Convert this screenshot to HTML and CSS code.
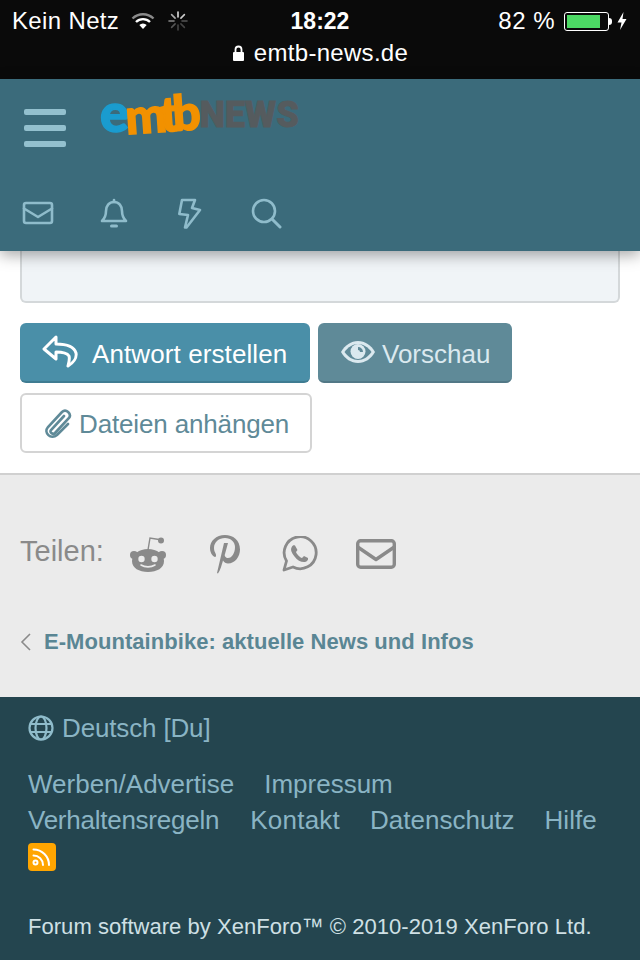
FILE: index.html
```html
<!DOCTYPE html>
<html lang="de">
<head>
<meta charset="utf-8">
<title>emtb-news.de</title>
<link rel="stylesheet" href="styles.css">
</head>
<body>
<div class="status">
  <div class="status-row">
    <div class="status-left">
      <span class="carrier">Kein Netz</span>
      <svg class="wifi" width="24" height="18" viewBox="0 0 24 18"><path d="M1.500 6.500a15 15 0 0 1 21 0" fill="none" stroke="#8a8a8a" stroke-width="2.400"/><path d="M5 10a10 10 0 0 1 14 0" fill="none" stroke="#fff" stroke-width="2.400"/><path d="M8.300 13a5.200 5.200 0 0 1 7.400 0L12 17z" fill="#fff"/></svg>
      <svg class="spin" width="20" height="20" viewBox="0 0 20 20" stroke-width="1.600" stroke-linecap="round"><path d="M10 1v5" stroke="#ddd"/><path d="M16.400 3.600l-3.500 3.500" stroke="#ccc"/><path d="M19 10h-5" stroke="#555"/><path d="M16.400 16.400l-3.500-3.500" stroke="#444"/><path d="M10 19v-5" stroke="#444"/><path d="M3.600 16.400l3.500-3.500" stroke="#555"/><path d="M1 10h5" stroke="#888"/><path d="M3.600 3.600l3.500 3.500" stroke="#aaa"/></svg>
    </div>
    <div class="clock">18:22</div>
    <div class="status-right">
      <span class="percent">82 %</span>
      <span class="battery"><span class="battery-fill"></span></span>
      <span class="battery-tip"></span>
      <svg width="12" height="20" viewBox="0 0 12 20"><path d="M7.500 1L1.500 11.500h4L4 19l6.500-11h-4z" fill="#fff"/></svg>
    </div>
  </div>
  <div class="url">
    <svg width="13" height="17" viewBox="0 0 13 17"><rect x="1" y="7" width="11" height="9" rx="1" fill="#fff"/><path d="M3.500 7V4.500a3 3 0 0 1 6 0V7" fill="none" stroke="#fff" stroke-width="1.800"/></svg>
    <span>emtb-news.de</span>
  </div>
</div>

<header class="header">
  <div class="header-top">
    <div class="burger"><i></i><i></i><i></i></div>
    <div class="logo"><span class="logo-e">e</span><span class="logo-mtb">mtb</span><span class="logo-news">NEWS</span></div>
  </div>
  <nav class="header-icons">
    <svg width="32" height="28" viewBox="0 0 32 28" fill="none" stroke="#8fbccb" stroke-width="2.600" stroke-linejoin="round" stroke-linecap="round"><rect x="2" y="4" width="28" height="20" rx="2"/><path d="M2 9.500l14 8.500 14-8.500"/></svg>
    <svg width="28" height="32" viewBox="0 0 28 32" fill="none" stroke="#8fbccb" stroke-width="2.600" stroke-linejoin="round" stroke-linecap="round"><path d="M14 5c-5 0-8 4-8 9 0 6-2 8-4 10h24c-2-2-4-4-4-10 0-5-3-9-8-9z"/><path d="M14 3v2"/><path d="M11.500 29h5" stroke-width="3"/></svg>
    <svg width="26" height="32" viewBox="0 0 26 32" fill="none" stroke="#8fbccb" stroke-width="2.600" stroke-linejoin="round" stroke-linecap="round"><path d="M5 3h13l-3 8 8 2-13.500 17.500H8l3-12.500-8.700-1z"/></svg>
    <svg width="32" height="32" viewBox="0 0 32 32" fill="none" stroke="#8fbccb" stroke-width="2.600" stroke-linecap="round"><circle cx="14" cy="14" r="11"/><path d="M22.500 22.500l7.500 7.500" stroke-width="3"/></svg>
  </nav>
</header>

<main class="main">
  <div class="editor"></div>
  <div class="btn-row">
    <button class="btn btn-primary">
      <svg width="38" height="34" viewBox="0 0 38 34" fill="none" stroke="#fff" stroke-width="3" stroke-linejoin="round"><path d="M14 2L2 14l12 10v-7c7 0 11 1 13 4 1 3 0 6-1 10 5-3 9-8 8-13-2-7-9-9-20-9z"/></svg>
      <span>Antwort erstellen</span>
    </button>
    <button class="btn btn-muted">
      <svg width="36" height="24" viewBox="0 0 36 24"><path d="M1 12C5 5 11 1 18 1s13 4 17 11c-4 7-10 11-17 11S5 19 1 12z" fill="#dbe9ef"/><path d="M4.500 12C8 7 13 4 18 4s10 3 13.500 8C28 17 23 20 18 20S8 17 4.500 12z" fill="#5f8a98"/><circle cx="18" cy="11.500" r="7.500" fill="#dbe9ef"/><path d="M18 7a5 5 0 0 1 5 5h-3a2 2 0 0 0-2-2z" fill="#5f8a98"/></svg>
      <span>Vorschau</span>
    </button>
  </div>
  <button class="btn btn-plain">
    <svg width="30" height="32" viewBox="0 0 30 32" fill="none" stroke="#5f8a98" stroke-width="2.600" stroke-linecap="round"><path d="M21 9L8 23c-2 2.500 2 5 4 3L26 11c3-4-3-10-7-6L5 20c-5 6 3 13 9 8l11-11"/></svg>
    <span>Dateien anhängen</span>
  </button>
</main>

<section class="share">
  <div class="share-row">
    <span class="share-label">Teilen:</span>
    <div class="share-icons">
      <svg width="38" height="38" viewBox="0 0 38 38"><path d="M3 26c0-7 7-12 16-12s16 5 16 12c0 7-7 11-16 11S3 33 3 26z" fill="#8a8a8a"/><circle cx="5" cy="20" r="4" fill="#8a8a8a"/><circle cx="33" cy="20" r="4" fill="#8a8a8a"/><circle cx="32" cy="5.500" r="3" fill="#8a8a8a"/><path d="M19 15l2-12 9 1.500" fill="none" stroke="#8a8a8a" stroke-width="1.400"/><circle cx="12.500" cy="24" r="3.200" fill="#ebebeb"/><circle cx="25.500" cy="24" r="3.200" fill="#ebebeb"/><path d="M12 30c4 2.500 10 2.500 14 0" fill="none" stroke="#ebebeb" stroke-width="1.600" stroke-linecap="round"/></svg>
      <svg width="32" height="40" viewBox="0 0 32 40"><path d="M16 1C7 1 1 7 1 14c0 4 2 8 5 9 1 0 1-1 1-2 0-2-2-3-2-7 0-6 5-10 11-10 6 0 10 4 10 9 0 6-3 11-7 11-2 0-4-2-3-4l3-11h-4l-7 30 1 .5c2-3 3-6 5-13 1 2 3 3 5 3 7 0 12-7 12-14C31 6 24 1 16 1z" fill="#8a8a8a"/></svg>
      <svg width="36" height="36" viewBox="0 0 36 36"><path d="M2 34l2.500-9A16 16 0 1 1 11 31z" fill="none" stroke="#8a8a8a" stroke-width="2.800" stroke-linejoin="round"/><path d="M13 9.500c-1-.5-2-.5-3 1-2 3-.5 6 2.500 10s7 6 10.500 5.500c2-.5 3.500-2 3-4l-4-2-2 2c-2-.5-5-3.500-6-6l1.500-2z" fill="#8a8a8a"/></svg>
      <svg width="40" height="30" viewBox="0 0 40 30" fill="none" stroke="#8a8a8a" stroke-width="3.400" stroke-linejoin="round" stroke-linecap="round"><rect x="1.700" y="1.700" width="36.600" height="26.600" rx="3"/><path d="M1.700 8l18.300 12.500L38.300 8"/></svg>
    </div>
  </div>
  <div class="crumb">
    <svg width="11" height="18" viewBox="0 0 11 18" fill="none" stroke="#8a8a8a" stroke-width="1.600"><path d="M10 1L2 9l8 8"/></svg>
    <span>E-Mountainbike: aktuelle News und Infos</span>
  </div>
</section>

<footer class="footer">
  <div class="lang">
    <svg width="26" height="26" viewBox="0 0 26 26" fill="none" stroke="#8fbccb" stroke-width="2.200"><circle cx="13" cy="13" r="11.500"/><ellipse cx="13" cy="13" rx="5.500" ry="11.500"/><path d="M2.500 9h21M2.500 17h21"/></svg>
    <span class="lang-name">Deutsch [Du]</span>
  </div>
  <div class="foot-links">
    <span>Werben/Advertise</span><span>Impressum</span>
  </div>
  <div class="foot-links">
    <span class="tight">Verhaltensregeln</span><span class="wide">Kontakt</span><span>Datenschutz</span><span>Hilfe</span>
  </div>
  <div class="rss">
    <svg width="20" height="20" viewBox="0 0 20 20" fill="none" stroke="#fff" stroke-width="2" stroke-linecap="round"><circle cx="3.500" cy="15.500" r="2"/><path d="M1.500 8.500a9.500 9.500 0 0 1 9.500 9.500"/><path d="M1.500 2.500a15.500 15.500 0 0 1 15.500 15.500"/></svg>
  </div>
  <div class="copyright">Forum software by XenForo™ © 2010-2019 XenForo Ltd.</div>
</footer>
</body>
</html>
```
FILE: styles.css
```css
* { box-sizing: border-box; }
html, body { margin: 0; padding: 0; }
body {
  width: 640px;
  height: 960px;
  overflow: hidden;
  font-family: "Liberation Sans", Arial, sans-serif;
  background: #fff;
}
.status {
  height: 79px;
  background: #0a0a0a;
  color: #fff;
  font-size: 24px;
  padding: 0 12px;
}
.status-row {
  height: 42px;
  display: grid;
  grid-template-columns: 1fr auto 1fr;
  align-items: center;
}
.status-left { display: flex; align-items: center; }
.carrier { letter-spacing: .35px; }
.wifi { margin-left: 12px; }
.spin { margin-left: 13px; }
.clock { font-weight: 700; font-size: 23px; }
.status-right {
  display: flex;
  align-items: center;
  justify-content: flex-end;
}
.percent { letter-spacing: .5px; }
.battery {
  width: 45px;
  height: 19px;
  margin-left: 9px;
  border: 1.500px solid #fff;
  border-radius: 3px;
  padding: 2px;
  display: block;
}
.battery-fill { display: block; height: 100%; width: 33px; background: #4cd964; }
.battery-tip {
  width: 3px;
  height: 7px;
  margin: 0 4px 0 0;
  background: #fff;
  border-radius: 0 3px 3px 0;
}
.url {
  display: flex;
  justify-content: center;
  align-items: center;
  gap: 9px;
  height: 22px;
  font-size: 24px;
  letter-spacing: .3px;
}
.header {
  height: 172px;
  background: #3b6b7b;
  position: relative;
  z-index: 2;
  box-shadow: 0 4px 14px rgba(0, 0, 0, .35);
  padding: 0 24px;
}
.header-top { display: flex; height: 104px; }
.burger {
  width: 42px;
  padding-top: 30px;
  display: flex;
  flex-direction: column;
  gap: 10px;
}
.burger i { display: block; height: 6px; border-radius: 2px; background: #93c0ce; }
.logo {
  margin-left: 34px;
  height: 60px;
  padding-top: 3px;
  display: flex;
  align-items: baseline;
  font-family: Lato, sans-serif;
  font-weight: 900;
  line-height: 60px;
}
.logo-e {
  color: #1a9ccf;
  font-size: 54px;
  letter-spacing: -2px;
  -webkit-text-stroke: 1.500px #1a9ccf;
}
.logo-mtb {
  display: inline-block;
  color: #f29100;
  font-size: 49px;
  letter-spacing: -6px;
  transform: rotate(-4deg);
  -webkit-text-stroke: 1.500px #f29100;
  margin-left: -2px;
}
.logo-news {
  color: #555b5e;
  font-family: Roboto, sans-serif;
  font-weight: 900;
  font-size: 36px;
  letter-spacing: 0;
  margin-left: 5px;
  transform: translateY(-5px);
  -webkit-text-stroke: .8px #555b5e;
}
.header-icons {
  display: flex;
  align-items: center;
  height: 60px;
  margin-left: -2px;
}
.header-icons svg:nth-child(1) { margin-right: 46px; }
.header-icons svg:nth-child(2) { margin-right: 49px; }
.header-icons svg:nth-child(3) { margin-right: 47px; }
.main {
  height: 224px;
  padding: 0 20px;
  background: #fff;
  border-bottom: 2px solid #d0d0d0;
}
.editor {
  height: 52px;
  background: #f0f4f7;
  border: 2px solid #d4d8da;
  border-top: 0;
  border-radius: 0 0 6px 6px;
  margin-bottom: 20px;
}
.btn-row { display: flex; gap: 8px; margin-bottom: 10px; }
.btn {
  display: flex;
  align-items: center;
  height: 60px;
  font-family: inherit;
  font-size: 26px;
  border-radius: 6px;
  padding: 0;
  border: 0;
}
.btn span { padding-top: 2px; }
.btn-row .btn span { padding-top: 4px; }
.btn-primary {
  width: 290px;
  background: #4a8fa8;
  color: #fff;
  border-bottom: 2px solid #3f7c92;
  padding-left: 22px;
  gap: 12px;
  letter-spacing: .1px;
}
.btn-muted {
  width: 194px;
  background: #5f8a98;
  color: #dbe9ef;
  border-bottom: 2px solid #527886;
  padding-left: 22px;
  gap: 6px;
}
.btn-plain {
  width: 292px;
  background: #fff;
  color: #5f8a98;
  border: 2px solid #d4d4d4;
  padding-left: 21px;
  gap: 6px;
  letter-spacing: -.15px;
}
.share {
  height: 222px;
  background: #ebebeb;
  padding: 0 20px;
}
.share-row { display: flex; align-items: center; padding-top: 59px; }
.share-label { color: #8a8a8a; font-size: 29px; margin: 0 25px 6px 0; }
.share-icons { display: flex; align-items: center; }
.share-icons svg:nth-child(1) { margin-right: 42px; }
.share-icons svg:nth-child(2) { margin-right: 41px; }
.share-icons svg:nth-child(3) { margin-right: 38px; }
.crumb {
  display: flex;
  align-items: center;
  gap: 13px;
  margin-top: 55px;
  font-size: 22px;
  font-weight: 700;
  letter-spacing: .05px;
  color: #5a8694;
}
.footer {
  height: 263px;
  background: #24454f;
  color: #8ab4c4;
  padding: 1px 28px 0;
  font-size: 26px;
}
.lang { display: flex; align-items: center; gap: 8px; height: 60px; margin-bottom: 8px; }
.lang-name { letter-spacing: -.15px; }
.foot-links { display: flex; gap: 30px; height: 36px; align-items: center; }
.tight { letter-spacing: -.25px; margin-right: 1px; }
.wide { letter-spacing: .25px; }
.rss {
  width: 28px;
  height: 28px;
  margin-top: 5px;
  background: #ffa500;
  border-radius: 4px;
  display: flex;
  align-items: center;
  justify-content: center;
}
.copyright { color: #cfe0e5; font-size: 22px; letter-spacing: .04px; margin-top: 43px; }
```
